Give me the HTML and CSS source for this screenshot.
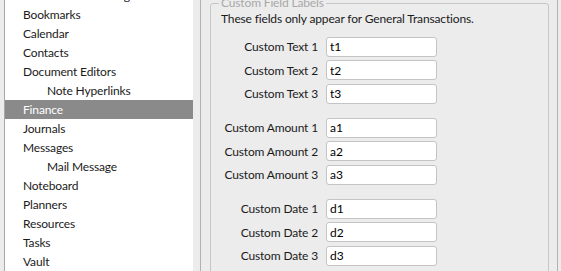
FILE: index.html
```html
<!DOCTYPE html>
<html>
<head>
<meta charset="utf-8">
<link rel="stylesheet" href="styles.css">
</head>
<body>
<div class="window">
  <div class="edge"></div>
  <nav class="sidebar">
    <ul class="tree">
      <li class="item">Attachment Indexing</li>
      <li class="item">Bookmarks</li>
      <li class="item">Calendar</li>
      <li class="item">Contacts</li>
      <li class="item">Document Editors</li>
      <li class="item sub">Note Hyperlinks</li>
      <li class="item selected">Finance</li>
      <li class="item">Journals</li>
      <li class="item">Messages</li>
      <li class="item sub">Mail Message</li>
      <li class="item">Noteboard</li>
      <li class="item">Planners</li>
      <li class="item">Resources</li>
      <li class="item">Tasks</li>
      <li class="item">Vault</li>
    </ul>
  </nav>
  <div class="content">
    <div class="panel">
      <fieldset class="group">
        <legend class="legend">Custom Field Labels</legend>
        <p class="note">These fields only appear for General Transactions.</p>
        <div class="fields">
          <div class="field-group">
            <label class="row"><span class="label">Custom Text 1</span><input class="input" value="t1" readonly></label>
            <label class="row"><span class="label">Custom Text 2</span><input class="input" value="t2" readonly></label>
            <label class="row"><span class="label">Custom Text 3</span><input class="input" value="t3" readonly></label>
          </div>
          <div class="field-group">
            <label class="row"><span class="label">Custom Amount 1</span><input class="input" value="a1" readonly></label>
            <label class="row"><span class="label">Custom Amount 2</span><input class="input" value="a2" readonly></label>
            <label class="row"><span class="label">Custom Amount 3</span><input class="input" value="a3" readonly></label>
          </div>
          <div class="field-group">
            <label class="row"><span class="label">Custom Date 1</span><input class="input" value="d1" readonly></label>
            <label class="row"><span class="label">Custom Date 2</span><input class="input" value="d2" readonly></label>
            <label class="row"><span class="label">Custom Date 3</span><input class="input" value="d3" readonly></label>
          </div>
        </div>
      </fieldset>
    </div>
  </div>
</div>
</body>
</html>
```

FILE: styles.css
```css
html, body {
  margin: 0;
  padding: 0;
  background: #ececec;
  font-family: "Lato", "Noto Sans", sans-serif;
  font-size: 12px;
  letter-spacing: -0.15px;
  color: #1b1b1b;
  overflow: hidden;
}

.window {
  display: flex;
  height: 271px;
  overflow: hidden;
}

.edge {
  width: 4px;
  border-right: 1px solid #a8a8a8;
  flex: none;
}

.sidebar {
  width: 188px;
  flex: none;
  background: #ffffff;
  overflow: hidden;
}

.tree {
  list-style: none;
  margin: -14.5px 0 0 0;
  padding: 0;
}

.item {
  height: 19px;
  line-height: 19px;
  padding-left: 18px;
  white-space: nowrap;
}

.item.sub {
  padding-left: 42px;
}

.item.selected {
  background: #8a8a8a;
  color: #ffffff;
}

.content {
  flex: 1;
  padding-left: 7px;
  padding-right: 3px;
}

.panel {
  border-left: 1px solid #b2b2b2;
  border-right: 1px solid #b2b2b2;
  height: 300px;
  margin-top: -5px;
  padding: 0 8px 0 9px;
}

.group {
  margin: 0;
  border: 1px solid #c6c6c6;
  border-radius: 3px;
  padding: 0 10px;
  height: 320px;
}

.legend {
  padding: 0 2px;
  margin-left: -2px;
  line-height: 16px;
  color: #a8a8a8;
}

.note {
  margin: 0;
  line-height: 16px;
}

.fields {
  margin-top: 9.5px;
  display: flex;
  flex-direction: column;
  gap: 14px;
}

.field-group {
  display: flex;
  flex-direction: column;
  gap: 3.5px;
}

.row {
  display: grid;
  grid-template-columns: 97px 111px;
  column-gap: 8px;
  align-items: center;
}

.label {
  text-align: right;
  white-space: nowrap;
}

.input {
  box-sizing: border-box;
  height: 20px;
  width: 111px;
  margin: 0;
  border: 1px solid #c4c4c4;
  border-radius: 3px;
  padding: 0 3px;
  font: inherit;
  color: #000;
  background: #fff;
  outline: none;
}
```
